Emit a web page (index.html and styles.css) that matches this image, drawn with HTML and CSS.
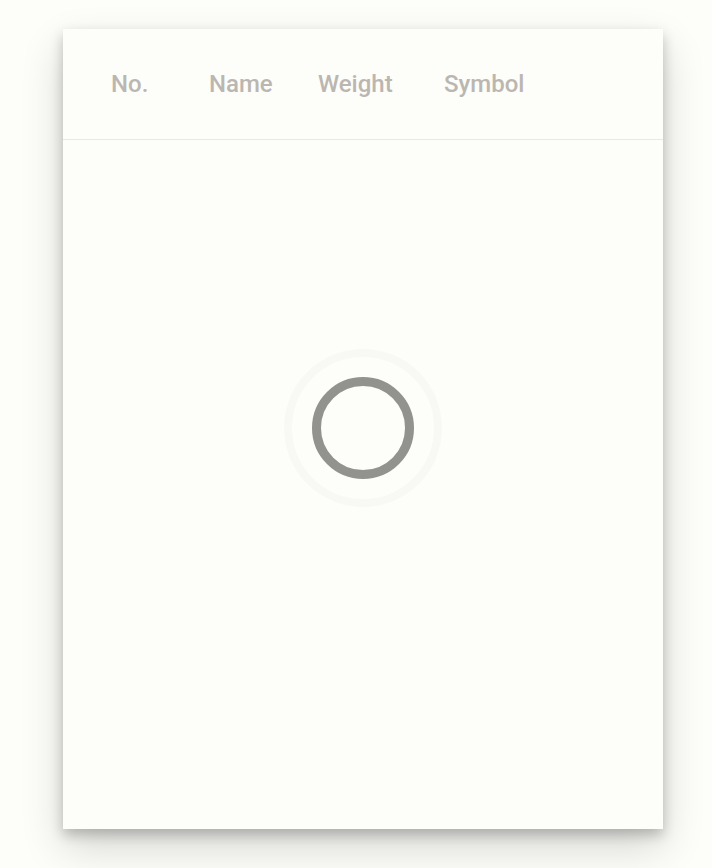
FILE: index.html
```html
<!DOCTYPE html>
<html>
<head>
<meta charset="utf-8">
<link rel="stylesheet" href="styles.css">
</head>
<body>
<div class="card">
  <div class="head">
    <div class="col c1">No.</div>
    <div class="col c2">Name</div>
    <div class="col c3">Weight</div>
    <div class="col c4">Symbol</div>
  </div>
  <div class="body">
    <svg class="spinner" width="160" height="160" viewBox="0 0 160 160">
      <circle cx="80" cy="80" r="75" fill="none" stroke="#f8f8f4" stroke-width="8"/>
      <circle cx="80" cy="80" r="46.5" fill="none" stroke="#92938e" stroke-width="9"/>
    </svg>
  </div>
</div>
</body>
</html>
```

FILE: styles.css
```css
html, body {
  margin: 0;
  padding: 0;
  background: #fdfdfa;
}
body {
  width: 712px;
  height: 868px;
  padding: 29px 0 0 63px;
  box-sizing: border-box;
  font-family: Roboto, "Liberation Sans", sans-serif;
}
.card {
  width: 600px;
  height: 800px;
  background: #fdfdfa;
  box-shadow: 0 6px 12px rgba(0,0,0,0.22), 0 18px 40px rgba(0,0,0,0.16);
  display: flex;
  flex-direction: column;
}
.head {
  height: 111px;
  border-bottom: 1px solid #e8e8e4;
  display: flex;
  align-items: center;
  padding-left: 48px;
  box-sizing: border-box;
}
.col {
  font-size: 24px;
  font-weight: 500;
  color: #bbb7b0;
}
.c1 { width: 98px; }
.c2 { width: 109px; }
.c3 { width: 126px; }
.body {
  flex: 1;
  display: flex;
  justify-content: center;
  align-items: flex-start;
  padding-top: 208px;
}
.spinner { display: block; }
```
